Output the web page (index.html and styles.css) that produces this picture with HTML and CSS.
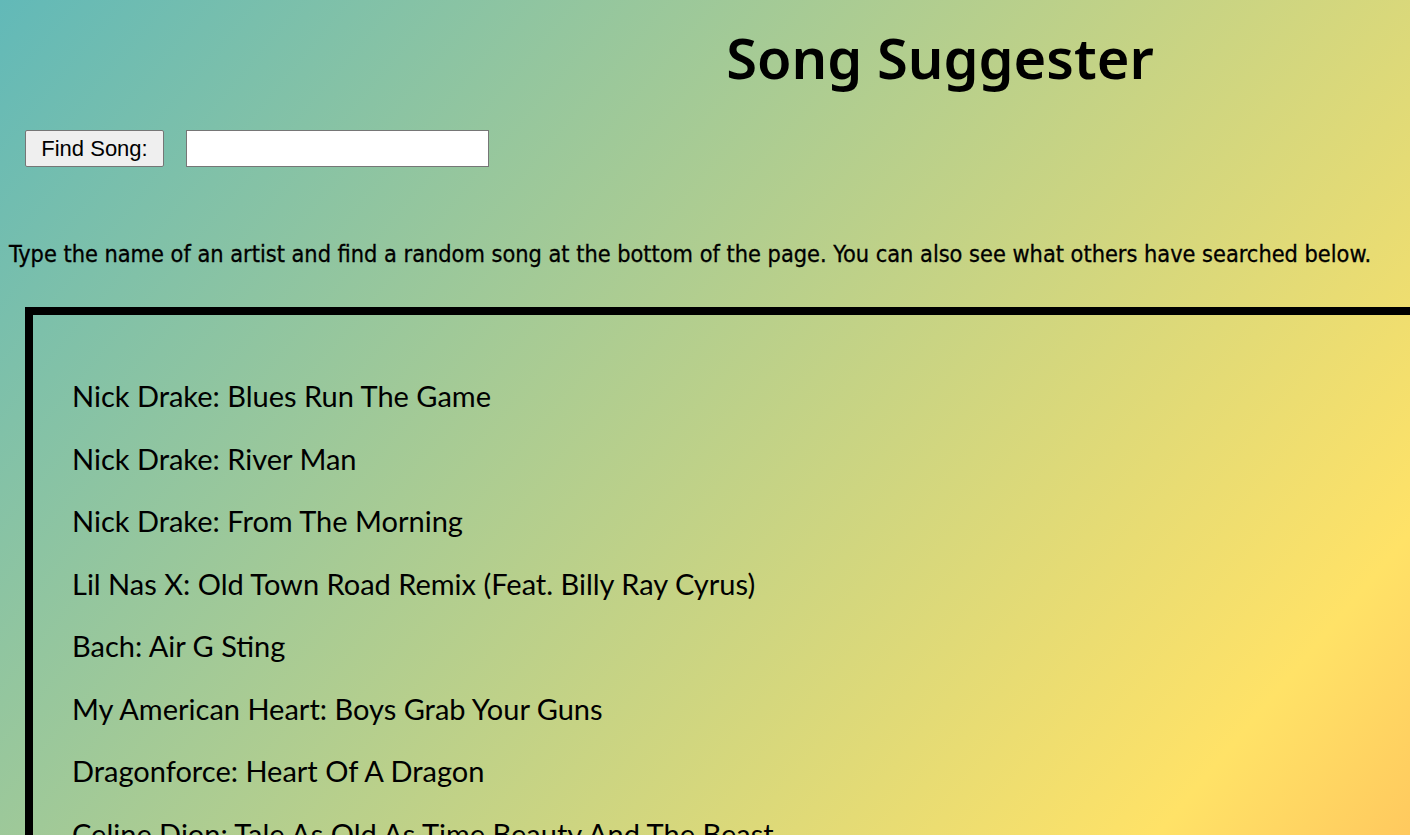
FILE: index.html
```html
<!DOCTYPE html>
<html lang="en">
<head>
<meta charset="utf-8">
<title>Song Suggester</title>
<link rel="stylesheet" href="styles.css">
</head>
<body>
<header class="title-bar">
  <h1 class="title">Song Suggester</h1>
</header>
<form class="search">
  <button type="button" class="search-btn">Find Song:</button>
  <input type="text" class="search-input">
</form>
<p class="intro">Type the name of an artist and find a random song at the bottom of the page. You can also see what others have searched below.</p>
<section class="history">
  <ul class="history-list">
    <li>Nick Drake: Blues Run The Game</li>
    <li>Nick Drake: River Man</li>
    <li>Nick Drake: From The Morning</li>
    <li>Lil Nas X: Old Town Road Remix (Feat. Billy Ray Cyrus)</li>
    <li>Bach: Air G Sting</li>
    <li>My American Heart: Boys Grab Your Guns</li>
    <li>Dragonforce: Heart Of A Dragon</li>
    <li>Celine Dion: Tale As Old As Time Beauty And The Beast</li>
    <li>Nick Drake: Pink Moon</li>
  </ul>
</section>
</body>
</html>
```
FILE: styles.css
```css
html, body {
  height: 100%;
}
body {
  margin: 0;
  padding: 0 8px;
  overflow: hidden;
  background: linear-gradient(130deg, #62b9b8 0%, #ffe267 88%, #ffc95e 100%) fixed;
  color: #000;
  font-family: "Liberation Sans", Arial, sans-serif;
}
.title-bar {
  display: flex;
  justify-content: center;
  padding: 17px 0 0 470px;
}
.title {
  margin: 0;
  font-family: "Noto Sans", sans-serif;
  font-weight: 600;
  font-size: 56px;
  line-height: 80px;
}
.search {
  display: flex;
  gap: 22px;
  margin: 33px 0 0 17px;
}
.search-btn {
  width: 139px;
  height: 37px;
  font-family: "Liberation Sans", Arial, sans-serif;
  font-size: 22px;
  background: #efefef;
  border: 1px solid #767676;
  border-radius: 2px;
  padding: 0;
  color: #000;
}
.search-input {
  width: 303px;
  height: 37px;
  box-sizing: border-box;
  border: 1px solid #767676;
  background: #fff;
  padding: 0 4px;
  font-size: 20px;
}
.intro {
  margin: 72px 0 0 1px;
  font-family: "DejaVu Sans Condensed", sans-serif;
  font-size: 23.3px;
  line-height: 30px;
  white-space: nowrap;
  -webkit-text-stroke: 0.3px #000;
}
.history {
  margin: 38px -60px 0 17px;
  border: 8px solid #000;
  padding: 61px 39px 50px;
}
.history-list {
  list-style: none;
  margin: 0;
  padding: 0;
  font-family: "Lato", sans-serif;
  font-weight: 400;
  font-size: 29px;
  line-height: 40px;
}
.history-list li {
  margin-bottom: 22.5px;
}
```
